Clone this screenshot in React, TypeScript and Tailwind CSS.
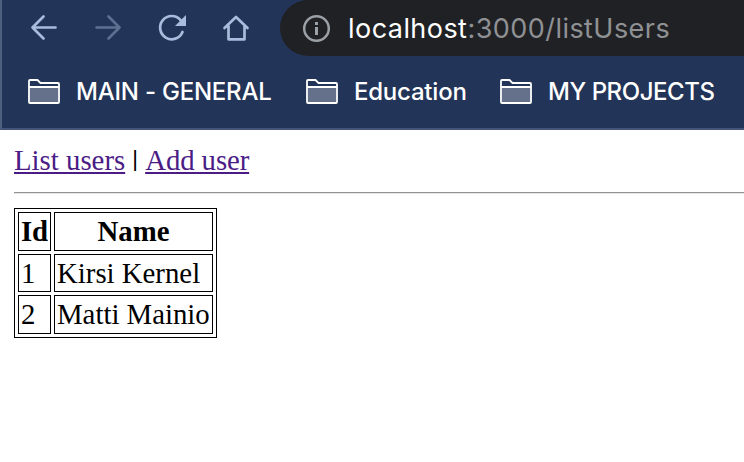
import type { ReactNode } from "react";

function Folder() {
  return (
    <svg width="32" height="25" viewBox="0 0 32 25" className="shrink-0" fill="none">
      <rect x="2" y="9" width="28" height="14" fill="#65718b" />
      <path
        d="M1 22.5V2Q1 1 2 1H9.5L12.5 4H30Q31 4 31 5V23Q31 24 30 24H2Q1 24 1 23ZM1 8H31"
        stroke="#fff"
        strokeWidth="1.8"
      />
    </svg>
  );
}

function Bookmark({ children, className }: { children: ReactNode; className: string }) {
  return (
    <div className="flex items-center gap-4">
      <Folder />
      <span className={`whitespace-nowrap pt-[2px] text-[24px] leading-[30px] font-medium text-white ${className}`}>{children}</span>
    </div>
  );
}

function Toolbar() {
  return (
    <div className="flex h-[56px]">
      <div className="flex w-[278px] shrink-0 items-start pl-[26px] pt-[12px] text-[#a9bcdd]">
        <svg width="224" height="32" viewBox="28 12 224 32" fill="none" stroke="currentColor" strokeWidth="2.7" strokeLinecap="round" strokeLinejoin="round">
          <path d="M55.5 27.5H32.5M43.5 16.5L32.5 27.5L43.5 38.5" />
          <path d="M96.5 27.5H119.5M108.5 16.5L119.5 27.5L108.5 38.5" stroke="#5d7091" />
          <path d="M182.5 32A11.6 11.6 0 1 1 180.5 20" />
          <path d="M186 15V26H175Z" fill="currentColor" stroke="none" />
          <path d="M224.5 28L236 17L247.5 28M228.5 26V39.3H244.5V26" />
        </svg>
      </div>
      <div className="flex grow items-center rounded-l-full bg-[#202124] pl-[22px]">
        <svg width="29" height="29" viewBox="0 0 29 29" className="shrink-0" fill="none">
          <circle cx="14.5" cy="14.5" r="12.3" stroke="#9aa0a6" strokeWidth="2.5" />
          <path d="M14.5 13V21M14.5 8V11" stroke="#9aa0a6" strokeWidth="3" />
        </svg>
        <span className="ml-[17px] whitespace-nowrap pt-px text-[27px] leading-[34px] tracking-[0.45px] text-[#8f9194]">
          <span className="text-white">localhost</span>:3000/listUsers
        </span>
      </div>
    </div>
  );
}

const users = [
  { id: 1, name: "Kirsi Kernel" },
  { id: 2, name: "Matti Mainio" },
];

export default function App() {
  return (
    <div className="h-[462px] w-[744px] overflow-hidden bg-white font-['Liberation_Serif',serif] text-[28.8px] text-black">
      <header className="h-[130px] border-b-2 border-l-2 border-b-[#435579] border-l-[#4d607d] bg-[#223457] font-['Inter',sans-serif]">
        <Toolbar />
        <div className="flex h-[70px] items-center gap-[34px] pl-[26px]">
          <Bookmark className="w-[196px] tracking-[-0.22px]">MAIN - GENERAL</Bookmark>
          <Bookmark className="w-[112px] tracking-[-0.22px]">Education</Bookmark>
          <Bookmark className="w-[170px] tracking-[-0.45px]">MY PROJECTS</Bookmark>
        </div>
      </header>
      <main className="pl-[14px]">
        <nav className="flex h-[62px] pt-[13px] leading-[34px]">
          <a href="#list" className="text-[#4b1c86] underline decoration-2 underline-offset-[2px]">List users</a>
          <span className="w-[20px] text-center font-['Liberation_Sans',sans-serif] text-[22px] leading-[32px]">|</span>
          <a href="#add" className="tracking-[-0.1px] text-[#4b1c86] underline decoration-2 underline-offset-[2px]">Add user</a>
        </nav>
        <hr className="h-[2px] border-0 border-t border-[#929292] bg-[#e5e5e5]" />
        <table className="mt-[14px] w-[203px] table-fixed border-separate border-spacing-[3px] border border-black leading-[34px]">
          <thead>
            <tr className="h-[39px]">
              <th className="w-[33px] border border-black p-0 pb-[2px]">Id</th>
              <th className="border border-black p-0 pb-[2px]">Name</th>
            </tr>
          </thead>
          <tbody>
            {users.map((user) => (
              <tr key={user.id} className={user.id === 1 ? "h-[38px]" : "h-[39px]"}>
                <td className="border border-black p-0 pb-px pl-[2px]">{user.id}</td>
                <td className="whitespace-nowrap border border-black p-0 pb-px pl-[2px]">{user.name}</td>
              </tr>
            ))}
          </tbody>
        </table>
      </main>
    </div>
  );
}
